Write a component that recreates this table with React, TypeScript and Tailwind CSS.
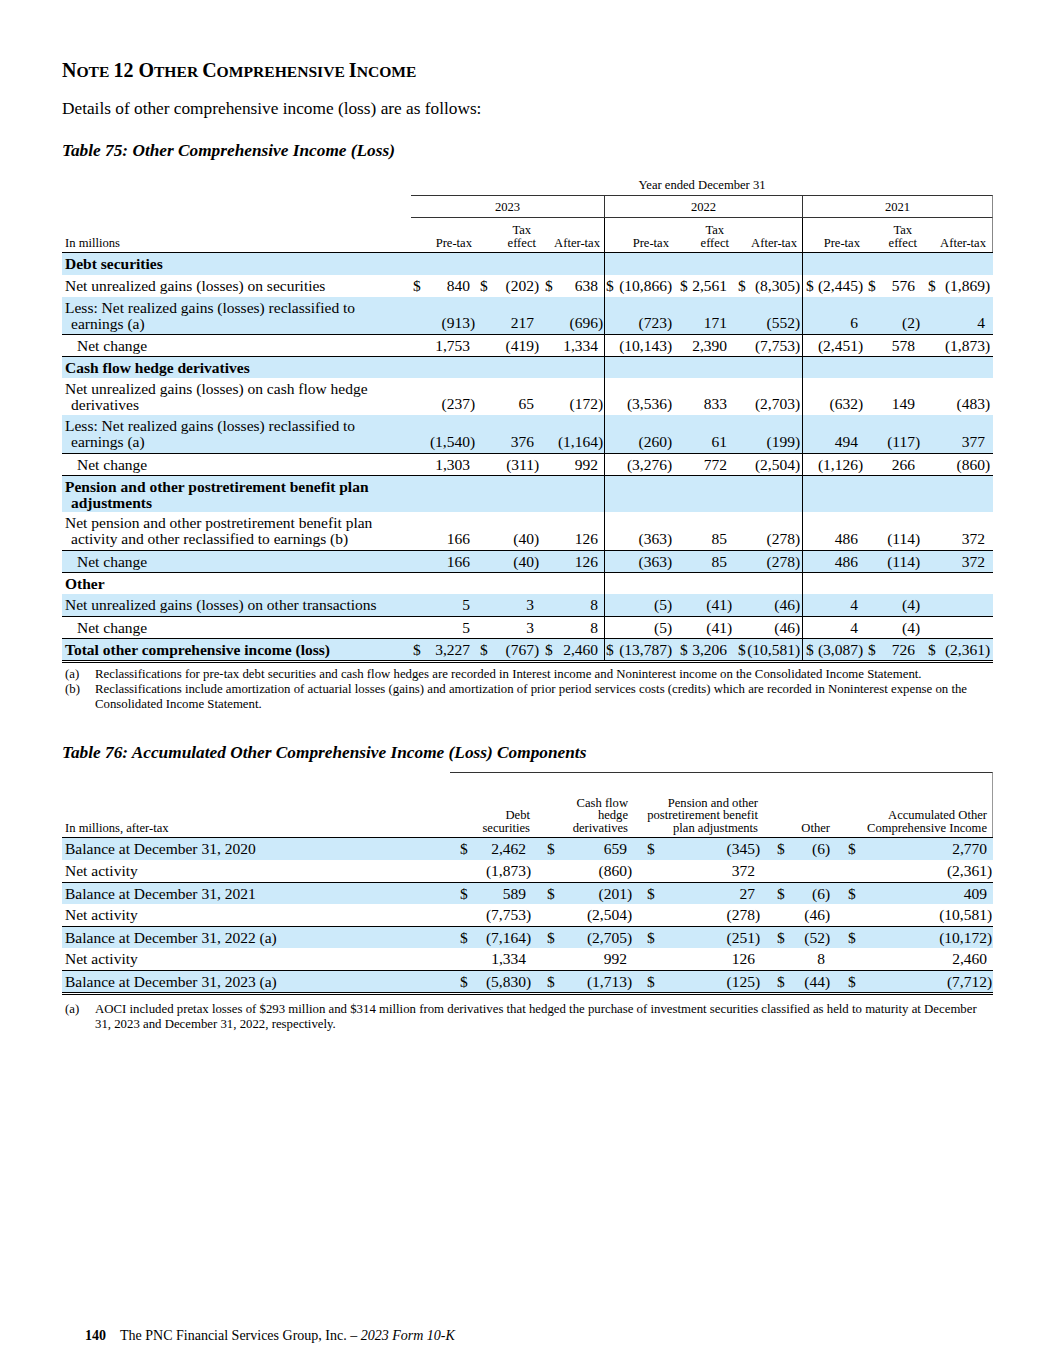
import React from "react";

const COLS75 = "grid grid-cols-[349px_66px_64px_63px_72px_60px_66px_64px_60px_67px]";
const COLS76 = "grid grid-cols-[388px_85px_101px_129px_70px_158px]";

const PL75 = ["pl-[2px]", "pl-[3px]", "pl-[4px]", "pl-[1px]", "pl-[4px]", "pl-[2px]", "pl-[3px]", "pl-[2px]", "pl-[2px]"];
const PR75 = ["pr-[2px]", "pr-[2px]", "pr-[1px]", "pr-[4px]", "pr-[4px]", "pr-[2px]", "pr-[3px]", "pr-[6px]", "pr-[3px]"];
const PL76 = ["pl-[10px]", "pl-[12px]", "pl-[11px]", "pl-[12px]", "pl-[13px]"];
const PR76 = ["pr-[4px]", "pr-[4px]", "pr-[5px]", "pr-[5px]", "pr-[1px]"];
const HPR76 = ["pr-[5px]", "pr-[8px]", "pr-[7px]", "pr-[5px]", "pr-[5px]"];

const HCLS: Record<number, string> = { 22: "h-[22px]", 37: "h-[37px]", 38: "h-[38px]" };

function Num({ v, d, pl, pr }: { v: string; d?: boolean; pl: string; pr: string }) {
  const paren = v.endsWith(")");
  const main = paren ? v.slice(0, -1) : v;
  return (
    <div className={`flex justify-between whitespace-nowrap ${pl} ${pr}`}>
      <span>{d ? "$" : ""}</span>
      <span>
        {main}
        <span className="inline-block w-[5px]">{paren ? ")" : ""}</span>
      </span>
    </div>
  );
}

type Row75 = {
  label: string[];
  vals?: string[];
  dollar?: boolean;
  bg?: boolean;
  bold?: boolean;
  indent?: boolean;
  h: number;
  bt?: boolean;
};

const rows75: Row75[] = [
  { label: ["Debt securities"], bold: true, bg: true, h: 22 },
  {
    label: ["Net unrealized gains (losses) on securities"],
    vals: ["840", "(202)", "638", "(10,866)", "2,561", "(8,305)", "(2,445)", "576", "(1,869)"],
    dollar: true,
    h: 22,
  },
  {
    label: ["Less: Net realized gains (losses) reclassified to", "earnings (a)"],
    vals: ["(913)", "217", "(696)", "(723)", "171", "(552)", "6", "(2)", "4"],
    bg: true,
    h: 37,
  },
  {
    label: ["Net change"],
    indent: true,
    vals: ["1,753", "(419)", "1,334", "(10,143)", "2,390", "(7,753)", "(2,451)", "578", "(1,873)"],
    h: 22,
    bt: true,
  },
  { label: ["Cash flow hedge derivatives"], bold: true, bg: true, h: 22, bt: true },
  {
    label: ["Net unrealized gains (losses) on cash flow hedge", "derivatives"],
    vals: ["(237)", "65", "(172)", "(3,536)", "833", "(2,703)", "(632)", "149", "(483)"],
    h: 37,
  },
  {
    label: ["Less: Net realized gains (losses) reclassified to", "earnings (a)"],
    vals: ["(1,540)", "376", "(1,164)", "(260)", "61", "(199)", "494", "(117)", "377"],
    bg: true,
    h: 38,
  },
  {
    label: ["Net change"],
    indent: true,
    vals: ["1,303", "(311)", "992", "(3,276)", "772", "(2,504)", "(1,126)", "266", "(860)"],
    h: 22,
    bt: true,
  },
  {
    label: ["Pension and other postretirement benefit plan", "adjustments"],
    bold: true,
    bg: true,
    h: 37,
    bt: true,
  },
  {
    label: ["Net pension and other postretirement benefit plan", "activity and other reclassified to earnings (b)"],
    vals: ["166", "(40)", "126", "(363)", "85", "(278)", "486", "(114)", "372"],
    h: 38,
  },
  {
    label: ["Net change"],
    indent: true,
    vals: ["166", "(40)", "126", "(363)", "85", "(278)", "486", "(114)", "372"],
    bg: true,
    h: 22,
    bt: true,
  },
  { label: ["Other"], bold: true, h: 22, bt: true },
  {
    label: ["Net unrealized gains (losses) on other transactions"],
    vals: ["5", "3", "8", "(5)", "(41)", "(46)", "4", "(4)", ""],
    bg: true,
    h: 22,
  },
  {
    label: ["Net change"],
    indent: true,
    vals: ["5", "3", "8", "(5)", "(41)", "(46)", "4", "(4)", ""],
    h: 22,
    bt: true,
  },
  {
    label: ["Total other comprehensive income (loss)"],
    bold: true,
    vals: ["3,227", "(767)", "2,460", "(13,787)", "3,206", "(10,581)", "(3,087)", "726", "(2,361)"],
    dollar: true,
    bg: true,
    h: 22,
    bt: true,
  },
];

const heads75 = ["Pre-tax", "Tax|effect", "After-tax"];

function Table75() {
  return (
    <div className="w-[931px] text-[15.5px] leading-[16px]">
      {/* Year ended row */}
      <div className={`${COLS75} h-[17px] text-[12.6px] leading-[12px]`}>
        <div />
        <div className="col-span-9 flex items-start justify-center pt-[1px]">Year ended December 31</div>
      </div>
      {/* Year row */}
      <div className={`${COLS75} h-[23px] text-[12.6px] leading-[12px]`}>
        <div />
        {["2023", "2022", "2021"].map((y, i) => (
          <div
            key={y}
            className={`col-span-3 flex items-center justify-center border-t border-b border-[#333] ${
              i > 0 ? "border-l" : ""
            } ${i === 2 ? "border-r border-r-[#888]" : ""}`}
          >
            {y}
          </div>
        ))}
      </div>
      {/* column heads */}
      <div className={`${COLS75} h-[35px] border-b border-black text-[12.6px] leading-[12.5px]`}>
        <div className="flex items-end pb-[3px] pl-[3px]">In millions</div>
        {Array.from({ length: 9 }).map((_, i) => {
          const h = heads75[i % 3];
          const parts = h.split("|");
          return (
            <div
              key={i}
              className={`flex items-end justify-end pb-[3px] ${PR75[i]} ${i === 3 || i === 6 ? "border-l border-black" : ""} ${
                i === 8 ? "border-r border-r-[#888]" : ""
              }`}
            >
              <span className="mr-[3px] inline-block text-center">
                {parts.map((p, k) => (
                  <div key={k}>{p}</div>
                ))}
              </span>
            </div>
          );
        })}
      </div>
      {rows75.map((r, ri) => {
        const multi = r.label.length > 1;
        return (
          <div
            key={ri}
            className={`${COLS75} ${HCLS[r.h]} ${r.bg ? "bg-[#cdeafa]" : ""} ${r.bt ? "border-t border-black" : ""}`}
          >
            <div
              className={`${multi ? "pt-[3px] leading-[15.5px]" : "flex items-center"} ${
                r.indent ? "pl-[15px]" : "pl-[3px]"
              } ${r.bold ? "font-bold" : ""} whitespace-nowrap`}
            >
              {multi ? (
                <>
                  <div>{r.label[0]}</div>
                  <div className="pl-[6px]">{r.label[1]}</div>
                </>
              ) : (
                r.label[0]
              )}
            </div>
            {Array.from({ length: 9 }).map((_, i) => (
              <div
                key={i}
                className={`flex flex-col ${multi ? "justify-end pb-[3px]" : "justify-center"} ${
                  i === 3 || i === 6 ? "border-l border-black" : ""
                }`}
              >
                {r.vals ? (
                  <Num v={r.vals[i]} d={r.dollar} pl={PL75[i]} pr={PR75[i]} />
                ) : null}
              </div>
            ))}
          </div>
        );
      })}
      <div className="h-[3px] border-t border-b border-black" />
    </div>
  );
}

type Row76 = { label: string; vals: string[]; bal: boolean };
const rows76: Row76[] = [
  { label: "Balance at December 31, 2020", vals: ["2,462", "659", "(345)", "(6)", "2,770"], bal: true },
  { label: "Net activity", vals: ["(1,873)", "(860)", "372", "", "(2,361)"], bal: false },
  { label: "Balance at December 31, 2021", vals: ["589", "(201)", "27", "(6)", "409"], bal: true },
  { label: "Net activity", vals: ["(7,753)", "(2,504)", "(278)", "(46)", "(10,581)"], bal: false },
  { label: "Balance at December 31, 2022 (a)", vals: ["(7,164)", "(2,705)", "(251)", "(52)", "(10,172)"], bal: true },
  { label: "Net activity", vals: ["1,334", "992", "126", "8", "2,460"], bal: false },
  { label: "Balance at December 31, 2023 (a)", vals: ["(5,830)", "(1,713)", "(125)", "(44)", "(7,712)"], bal: true },
];

const heads76 = [
  ["Debt", "securities"],
  ["Cash flow", "hedge", "derivatives"],
  ["Pension and other", "postretirement benefit", "plan adjustments"],
  ["Other"],
  ["Accumulated Other", "Comprehensive Income"],
];

function Table76() {
  return (
    <div className="w-[931px] text-[15.5px] leading-[16px]">
      <div className={`${COLS76} h-[66px] border-b border-black text-[12.6px] leading-[12.5px]`}>
        <div className="flex items-end pb-[3px] pl-[3px]">In millions, after-tax</div>
        {heads76.map((h, i) => (
          <div
            key={i}
            className={`flex flex-col items-end justify-end pb-[3px] text-right border-t border-[#333] ${HPR76[i]} ${
              i === 4 ? "border-r border-r-[#999]" : ""
            }`}
          >
            {h.map((p, k) => (
              <div key={k} className="whitespace-nowrap">{p}</div>
            ))}
          </div>
        ))}
      </div>
      {rows76.map((r, ri) => (
        <div
          key={ri}
          className={`${COLS76} h-[22px] ${r.bal ? "bg-[#cdeafa]" : ""} ${r.bal && ri > 0 ? "border-t border-black" : ""}`}
        >
          <div className="flex items-center pl-[3px] whitespace-nowrap">{r.label}</div>
          {r.vals.map((v, i) => (
            <div key={i} className="flex flex-col justify-center">
              <Num v={v} d={r.bal} pl={PL76[i]} pr={PR76[i]} />
            </div>
          ))}
        </div>
      ))}
      <div className="h-[3px] border-t border-b border-black" />
    </div>
  );
}

function Foot({ k, children }: { k: string; children: React.ReactNode }) {
  return (
    <div className="grid grid-cols-[30px_1fr] pl-[3px] text-[12.8px] leading-[15px]">
      <div>{k}</div>
      <div>{children}</div>
    </div>
  );
}

function Big({ children }: { children: React.ReactNode }) {
  return <span className="text-[20px]">{children}</span>;
}
function Sm({ children }: { children: React.ReactNode }) {
  return <span className="text-[15.6px]">{children}</span>;
}

export default function App() {
  return (
    <div className="w-[1055px] h-[1365px] bg-white text-black font-['Liberation_Serif',serif] pl-[62px] pt-[59px]">
      <h1 className="leading-[22px] font-bold whitespace-nowrap">
        <Big>N</Big>
        <Sm>OTE</Sm> <Big>12 O</Big>
        <Sm>THER</Sm> <Big>C</Big>
        <Sm>OMPREHENSIVE</Sm> <Big>I</Big>
        <Sm>NCOME</Sm>
      </h1>
      <p className="mt-[16px] text-[17.3px] leading-[20px]">Details of other comprehensive income (loss) are as follows:</p>
      <p className="mt-[22px] text-[17.3px] leading-[20px] font-bold italic">Table 75: Other Comprehensive Income (Loss)</p>
      <div className="mt-[17px]">
        <Table75 />
      </div>
      <div className="mt-[4px] w-[931px]">
        <Foot k="(a)">
          Reclassifications for pre-tax debt securities and cash flow hedges are recorded in Interest income and Noninterest income on the Consolidated Income Statement.
        </Foot>
        <Foot k="(b)">
          Reclassifications include amortization of actuarial losses (gains) and amortization of prior period services costs (credits) which are recorded in Noninterest expense on the Consolidated Income Statement.
        </Foot>
      </div>
      <p className="mt-[31px] text-[17.3px] leading-[20px] font-bold italic">
        Table 76: Accumulated Other Comprehensive Income (Loss) Components
      </p>
      <div className="mt-[9px]">
        <Table76 />
      </div>
      <div className="mt-[7px] w-[931px]">
        <Foot k="(a)">
          AOCI included pretax losses of $293 million and $314 million from derivatives that hedged the purchase of investment securities classified as held to maturity at December 31, 2023 and December 31, 2022, respectively.
        </Foot>
      </div>
      <div className="mt-[294px] flex items-center gap-[14px] pl-[23px] text-[14px] leading-[20px]">
        <span className="font-bold">140</span>
        <span>
          The PNC Financial Services Group, Inc. – <i>2023 Form 10-K</i>
        </span>
      </div>
    </div>
  );
}
